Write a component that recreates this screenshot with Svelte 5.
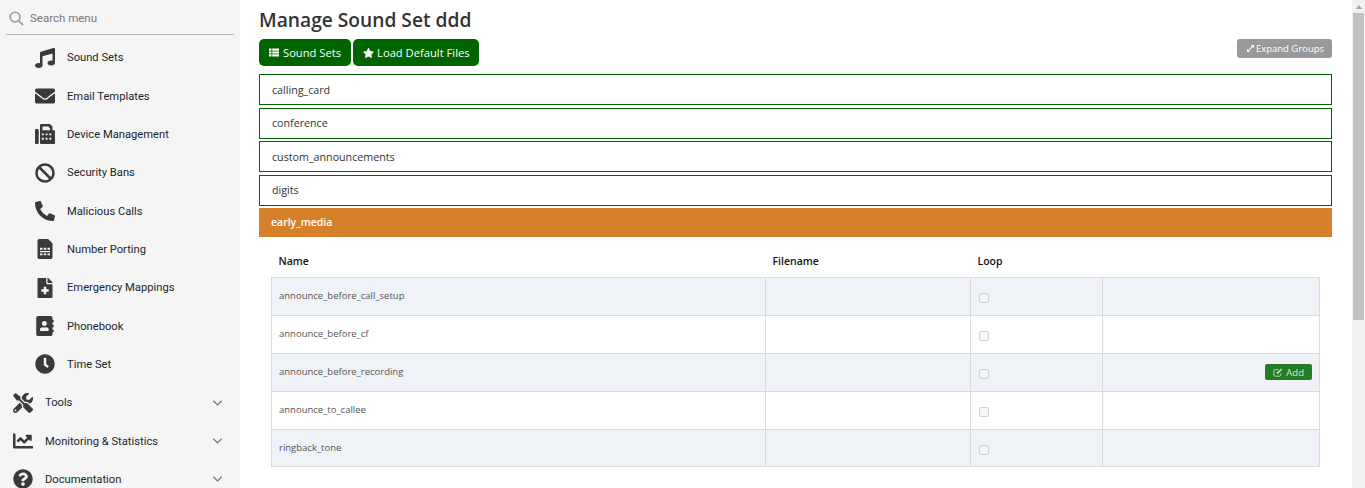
<script>
  const subItems = [
    { label: 'Sound Sets', view: '0 0 512 512', d: 'M470.38 1.51L150.41 96A32 32 0 0 0 128 126.51v261.41A139 139 0 0 0 96 384c-53 0-96 28.66-96 64s43 64 96 64 96-28.66 96-64V214.32l256-75v184.61a138.4 138.4 0 0 0-32-3.93c-53 0-96 28.66-96 64s43 64 96 64 96-28.65 96-64V32a32 32 0 0 0-41.62-30.49z' },
    { label: 'Email Templates', view: '0 0 512 512', d: 'M502.3 190.8c3.9-3.1 9.7-.2 9.7 4.7V400c0 26.5-21.5 48-48 48H48c-26.5 0-48-21.5-48-48V195.6c0-5 5.7-7.8 9.7-4.7 22.4 17.4 52.1 39.5 154.1 113.6 21.1 15.4 56.7 47.8 92.2 47.6 35.7.3 72-32.8 92.3-47.6 102-74.1 131.6-96.3 154-113.7zM256 320c23.2.4 56.6-29.2 73.4-41.4 132.7-96.3 142.8-104.7 173.4-128.7 5.8-4.5 9.2-11.5 9.2-18.9v-19c0-26.5-21.5-48-48-48H48C21.5 64 0 85.5 0 112v19c0 7.4 3.4 14.3 9.2 18.9 30.6 23.9 40.7 32.4 173.4 128.7 16.8 12.2 50.2 41.8 73.4 41.4z' },
    { label: 'Device Management', view: '0 0 512 512', d: 'M32 128h32c18 0 32 14 32 32v320c0 18-14 32-32 32H32c-18 0-32-14-32-32V160c0-18 14-32 32-32zM128 32c0-18 14-32 32-32h208c8 0 17 3 23 9l48 48c6 6 9 15 9 23v80h32c18 0 32 14 32 32v288c0 18-14 32-32 32H160c-18 0-32-14-32-32zM192 64v96h192V96h-32V64zM224 240h-48v48h48zm96 0h-48v48h48zm96 0h-48v48h48zM224 352h-48v48h48zm96 0h-48v48h48zm96 0h-48v48h48z' },
    { label: 'Security Bans', view: '0 0 512 512', d: 'M256 8C119.034 8 8 119.033 8 256s111.034 248 248 248 248-111.034 248-248S392.967 8 256 8zm130.108 117.892c65.448 65.448 70 165.481 20.677 235.637L150.47 105.216c70.204-49.356 170.226-44.735 235.638 20.676zM125.892 386.108c-65.448-65.448-70-165.481-20.677-235.637L361.53 406.784c-70.203 49.356-170.226 44.736-235.638-20.676z' },
    { label: 'Malicious Calls', view: '0 0 512 512', d: 'M497.39 361.8l-112-48a24 24 0 0 0-28 6.9l-49.6 60.6A370.66 370.66 0 0 1 130.6 204.11l60.6-49.6a23.94 23.94 0 0 0 6.9-28l-48-112A24.16 24.16 0 0 0 122.6.61l-104 24A24 24 0 0 0 0 48c0 256.5 207.9 464 464 464a24 24 0 0 0 23.4-18.6l24-104a24.29 24.29 0 0 0-14.01-27.6z' },
    { label: 'Number Porting', view: '0 0 384 512', d: 'M48 0h208c9 0 17 3 23 9l96 96c6 6 9 14 9 23v336c0 26-22 48-48 48H48c-26 0-48-22-48-48V48C0 22 22 0 48 0zM64 224v48h64v-48zm96 0v48h64v-48zm96 0v48h64v-48zM64 304v32h256v-32zm0 64v48h64v-48zm96 0v48h64v-48zm96 0v48h64v-48z' },
    { label: 'Emergency Mappings', view: '0 0 384 512', d: 'M377 105L279.1 7c-4.5-4.5-10.6-7-17-7H256v128h128v-6.1c0-6.3-2.5-12.4-7-16.9zM224 136V0H24C10.7 0 0 10.7 0 24v464c0 13.3 10.7 24 24 24h336c13.3 0 24-10.7 24-24V160H248c-13.2 0-24-10.800-24-24zm64 160v48c0 4.400-3.600 8-8 8h-56v56c0 4.400-3.600 8-8 8h-48c-4.400 0-8-3.600-8-8v-56h-56c-4.400 0-8-3.600-8-8v-48c0-4.400 3.600-8 8-8h56v-56c0-4.400 3.600-8 8-8h48c4.400 0 8 3.600 8 8v56h56c4.400 0 8 3.600 8 8z' },
    { label: 'Phonebook', view: '0 0 448 512', d: 'M436 160c6.600 0 12-5.400 12-12v-40c0-6.600-5.400-12-12-12h-20V48c0-26.500-21.500-48-48-48H48C21.500 0 0 21.500 0 48v416c0 26.500 21.500 48 48 48h320c26.500 0 48-21.500 48-48v-48h20c6.600 0 12-5.400 12-12v-40c0-6.600-5.400-12-12-12h-20v-64h20c6.600 0 12-5.400 12-12v-40c0-6.600-5.400-12-12-12h-20v-64h20zm-228-32c35.300 0 64 28.700 64 64s-28.700 64-64 64-64-28.700-64-64 28.700-64 64-64zm112 236.800c0 10.600-10 19.200-22.400 19.200H118.400C106 384 96 375.400 96 364.800v-19.200c0-31.800 30.100-57.600 67.200-57.600h5c12.300 5.100 25.700 8 39.800 8s27.600-2.900 39.800-8h5c37.100 0 67.200 25.800 67.200 57.600v19.200z' },
    { label: 'Time Set', view: '0 0 512 512', d: 'M256,8C119,8,8,119,8,256S119,504,256,504,504,393,504,256,393,8,256,8Zm92.49,313h0l-20,25a16,16,0,0,1-22.49,2.5h0l-67-49.72a40,40,0,0,1-15-31.23V112a16,16,0,0,1,16-16h32a16,16,0,0,1,16,16V256l58,42.5A16,16,0,0,1,348.49,321Z' }
  ];

  const topItems = [
    { label: 'Tools', view: '0 0 512 512', d: 'M501.1 395.7L384 278.6c-23.1-23.1-57.6-27.6-85.4-13.9L192 158.1V96L64 0 0 64l96 128h62.1l106.6 106.6c-13.6 27.8-9.2 62.3 13.9 85.4l117.1 117.1c14.6 14.6 38.2 14.6 52.7 0l52.7-52.7c14.5-14.6 14.5-38.2 0-52.7zM331.7 225c28.3 0 54.9 11 74.9 31l19.4 19.4c15.8-6.900 30.8-16.500 43.800-29.500 37.100-37.100 49.700-89.300 37.900-136.700-2.200-9-13.500-12.100-20.100-5.500l-74.400 74.400-67.900-11.300L334 98.900l74.400-74.400c6.600-6.600 3.400-17.900-5.700-20.200-47.400-11.700-99.600.9-136.600 37.900-28.500 28.500-41.900 66.100-41.200 103.600l82.100 82.100c8.100-1.900 16.500-2.900 24.700-2.900zm-103.900 82l-56.700-56.700L18.700 402.800c-25 25-25 65.500 0 90.500s65.500 25 90.500 0l123.600-123.600c-7.600-19.900-9.900-41.600-5-62.700zM64 472c-13.200 0-24-10.800-24-24 0-13.300 10.700-24 24-24s24 10.700 24 24c0 13.200-10.700 24-24 24z' },
    { label: 'Monitoring & Statistics', view: '0 0 512 512', d: 'M496 384H64V80c0-8.840-7.160-16-16-16H16C7.160 64 0 71.160 0 80v336c0 17.670 14.330 32 32 32h464c8.840 0 16-7.160 16-16v-32c0-8.840-7.160-16-16-16zM464 96H345.940c-21.380 0-32.090 25.850-16.970 40.970l32.400 32.400L288 242.750l-73.370-73.370c-12.500-12.500-32.760-12.500-45.250 0l-68.690 68.690c-6.250 6.250-6.250 16.380 0 22.630l22.620 22.620c6.250 6.250 16.380 6.250 22.630 0L192 237.250l73.370 73.370c12.500 12.500 32.760 12.500 45.250 0l96-96 32.400 32.400c15.120 15.120 40.970 4.410 40.970-16.970V112c.01-8.840-7.150-16-15.990-16z' },
    { label: 'Documentation', view: '0 0 512 512', d: 'M504 256c0 136.997-111.043 248-248 248S8 392.997 8 256C8 119.083 119.043 8 256 8s248 111.083 248 248zM262.655 90c-54.497 0-89.255 22.957-116.549 63.758-3.536 5.286-2.353 12.415 2.715 16.258l34.699 26.310c5.205 3.947 12.621 3.008 16.665-2.122 17.864-22.658 30.113-35.797 57.303-35.797 20.429 0 45.698 13.148 45.698 32.958 0 14.976-12.363 22.667-32.534 33.976C247.128 238.528 216 254.941 216 296v4c0 6.627 5.373 12 12 12h56c6.627 0 12-5.373 12-12v-1.333c0-28.462 83.186-29.647 83.186-106.667 0-58.002-60.165-102-116.531-102zM256 338c-25.365 0-46 20.635-46 46 0 25.364 20.635 46 46 46s46-20.636 46-46c0-25.365-20.635-46-46-46z' }
  ];

  const groups = ['calling_card', 'conference', 'custom_announcements', 'digits'];
  const rows = ['announce_before_call_setup', 'announce_before_cf', 'announce_before_recording', 'announce_to_callee', 'ringback_tone'];
</script>

<div class="page">
  <aside class="sidebar">
    <div class="search">
      <svg class="search-icon" viewBox="0 0 16 16" aria-hidden="true">
        <circle cx="6.5" cy="6.500" r="5.200" />
        <line x1="10.400" y1="10.400" x2="15" y2="15" />
      </svg>
      <span>Search menu</span>
    </div>
    <nav>
      {#each subItems as item}
        <div class="item sub">
          <svg class="icon" viewBox={item.view} aria-hidden="true"><path fill-rule="evenodd" d={item.d} /></svg>
          <span>{item.label}</span>
        </div>
      {/each}
      {#each topItems as item}
        <div class="item top">
          <svg class="icon" viewBox={item.view} aria-hidden="true"><path fill-rule="evenodd" d={item.d} /></svg>
          <span class="grow">{item.label}</span>
          <svg class="chevron" viewBox="0 0 12 8" aria-hidden="true"><path d="M1.500 1.500L6 6l4.500-4.500" /></svg>
        </div>
      {/each}
    </nav>
  </aside>

  <main class="content">
    <h1>Manage Sound Set ddd</h1>
    <div class="toolbar">
      <button class="btn">
        <svg class="btn-icon" viewBox="0 0 14 12" aria-hidden="true">
          <path fill="#fff" d="M0 .5h3.500v3H0zM4.500 .5H14v3H4.500zM0 4.500h3.500v3H0zM4.500 4.500H14v3H4.500zM0 8.500h3.500v3H0zM4.500 8.500H14v3H4.500z" />
        </svg>
        Sound Sets
      </button>
      <button class="btn tight">
        <svg class="btn-icon star" viewBox="0 0 576 512" aria-hidden="true">
          <path fill="#fff" d="M259.3 17.8L194 150.2 47.9 171.500c-26.200 3.800-36.700 36.100-17.700 54.600l105.700 103-25 145.500c-4.500 26.300 23.200 46 46.400 33.700L288 439.600l130.700 68.700c23.200 12.200 50.900-7.400 46.400-33.700l-25-145.500 105.700-103c19-18.500 8.500-50.800-17.700-54.600L382 150.200 316.700 17.800c-11.700-23.600-45.600-23.900-57.400 0z" />
        </svg>
        Load Default Files
      </button>
      <button class="expand">
        <svg viewBox="0 0 10 10" aria-hidden="true">
          <path fill="#fff" d="M5.500 0H10v4.500zM0 5.500L4.500 10H0z" />
          <path stroke="#fff" stroke-width="1.600" d="M2 8l6-6" />
        </svg>
        Expand Groups
      </button>
    </div>

    <div class="groups">
      {#each groups as group}
        <div class="group">{group}</div>
      {/each}
      <div class="group open">early_media</div>
    </div>

    <div class="table-wrap">
      <table>
        <thead>
          <tr>
            <th class="c-name">Name</th>
            <th class="c-file">Filename</th>
            <th class="c-loop">Loop</th>
            <th></th>
          </tr>
        </thead>
        <tbody>
          {#each rows as row, idx}
            <tr class:odd={idx % 2 === 0}>
              <td class="name">{row}</td>
              <td></td>
              <td class="loop"><input type="checkbox" disabled /></td>
              <td class="actions">
                {#if idx === 2}
                  <button class="add">
                    <svg viewBox="0 0 12 11" aria-hidden="true">
                      <path d="M9.500 6.500v2.300c0 .700-.500 1.200-1.200 1.200H2.200C1.500 10 1 9.500 1 8.800V3.200C1 2.500 1.500 2 2.200 2h4.300" fill="none" stroke="#cfe3cf" stroke-width="1" />
                      <path d="M4.500 5.500L9.800.800l1.200 1.200L6 7H4.500z" fill="#cfe3cf" />
                    </svg>
                    Add
                  </button>
                {/if}
              </td>
            </tr>
          {/each}
        </tbody>
      </table>
    </div>
  </main>

  <div class="scrollbar">
    <div class="arrow"></div>
    <div class="thumb"></div>
  </div>
</div>

<style>
  :global(body) {
    margin: 0;
    overflow: hidden;
    background: #fff;
  }

  .page {
    display: flex;
    height: 488px;
    overflow: hidden;
  }

  .sidebar {
    width: 240px;
    flex: none;
    background: #f5f5f5;
    font-family: Roboto, sans-serif;
    font-size: 11.200px;
    color: #212529;
    overflow: hidden;
  }

  .search {
    display: flex;
    align-items: center;
    gap: 6px;
    height: 32px;
    margin: 0 6px;
    padding: 2px 0 0 3px;
    border-bottom: 1px solid #b5b5b5;
    font-size: 11.500px;
    color: #777;
  }

  .search-icon {
    width: 15px;
    height: 15px;
    fill: none;
    stroke: #999;
    stroke-width: 1.700;
  }

  nav {
    padding-top: 3.600px;
  }

  .item {
    display: flex;
    align-items: center;
    height: 38.330px;
  }

  .sub {
    padding-left: 35px;
  }

  .top {
    padding-left: 13px;
  }

  .icon {
    width: 20px;
    height: 20px;
    flex: none;
    margin-right: 12px;
    fill: #3a3a3a;
  }

  .grow {
    flex: 1;
  }

  .chevron {
    width: 11px;
    height: 8px;
    margin-right: 17px;
    fill: none;
    stroke: #777;
    stroke-width: 1.400;
  }

  .content {
    flex: 1;
    min-width: 0;
    padding: 0 20px 0 19px;
    font-family: 'Open Sans', sans-serif;
  }

  h1 {
    margin: 0;
    padding-top: 6px;
    height: 39px;
    box-sizing: border-box;
    font-size: 19.200px;
    line-height: 27px;
    font-weight: 600;
    color: #333;
  }

  .toolbar {
    display: flex;
    align-items: flex-start;
    gap: 2px;
  }

  .btn {
    display: flex;
    align-items: center;
    gap: 4px;
    height: 27px;
    padding: 0 10px;
    border: 0;
    border-radius: 5px;
    background: #006400;
    color: #fff;
    font-family: inherit;
    font-size: 11.200px;
  }

  .tight {
    gap: 3px;
    padding-right: 9px;
  }

  .btn-icon {
    width: 10px;
    height: 9px;
  }

  .star {
    width: 11px;
    height: 10px;
  }

  .expand {
    display: flex;
    align-items: center;
    gap: 2px;
    height: 19px;
    margin-left: auto;
    padding: 0 8px 0 10px;
    border: 0;
    border-radius: 3px;
    background: #999;
    color: #fff;
    font-family: inherit;
    font-size: 9.500px;
  }

  .expand svg {
    width: 7px;
    height: 7px;
  }

  .groups {
    display: flex;
    flex-direction: column;
    gap: 2.500px;
    margin-top: 8px;
  }

  .group {
    display: flex;
    align-items: center;
    height: 31px;
    box-sizing: border-box;
    padding-left: 12px;
    border: 1px solid #006400;
    font-size: 10.700px;
    font-weight: 500;
    color: #333;
  }

  .group.open {
    height: 29px;
    padding-bottom: 1px;
    border: 0;
    background: #d6802a;
    color: #fff;
    font-weight: 600;
    font-size: 10.500px;
  }

  .table-wrap {
    padding: 0 12px 0 12px;
  }

  table {
    width: 100%;
    table-layout: fixed;
    border-collapse: collapse;
  }

  th {
    height: 40px;
    padding: 8px 0 0 7px;
    box-sizing: border-box;
    text-align: left;
    font-size: 10.500px;
    font-weight: 600;
    color: #111;
  }

  .c-name {
    width: 494px;
  }

  .c-file {
    width: 205px;
  }

  .c-loop {
    width: 132px;
  }

  td {
    height: 38px;
    padding: 0 7px;
    box-sizing: border-box;
    border: 1px solid #d8dadd;
    font-size: 9.500px;
    color: #555;
  }

  tr:last-child td {
    height: 37px;
  }

  .odd td {
    background: #eff2f7;
  }

  .name {
    padding-bottom: 1px;
  }

  .loop {
    padding-left: 8px;
    padding-top: 4px;
  }

  input {
    display: block;
    width: 10px;
    height: 10px;
    margin: 0;
  }

  .actions {
    text-align: right;
    padding-right: 7px;
  }

  .add {
    display: inline-flex;
    align-items: center;
    gap: 3px;
    height: 16px;
    padding: 0 8px 0 8px;
    border: 0;
    border-radius: 2px;
    background: #267c26;
    color: #d5e6d5;
    font-family: inherit;
    font-size: 9.500px;
  }

  .add svg {
    width: 10px;
    height: 9px;
  }

  .scrollbar {
    width: 13px;
    flex: none;
    background: #f1f1f1;
  }

  .arrow {
    width: 0;
    height: 0;
    margin: 5px auto 4px;
    border-left: 3.500px solid transparent;
    border-right: 3.500px solid transparent;
    border-bottom: 4px solid #a3a3a3;
  }

  .thumb {
    width: 11px;
    height: 307px;
    margin: 0 auto;
    background: #c1c1c1;
  }
</style>
